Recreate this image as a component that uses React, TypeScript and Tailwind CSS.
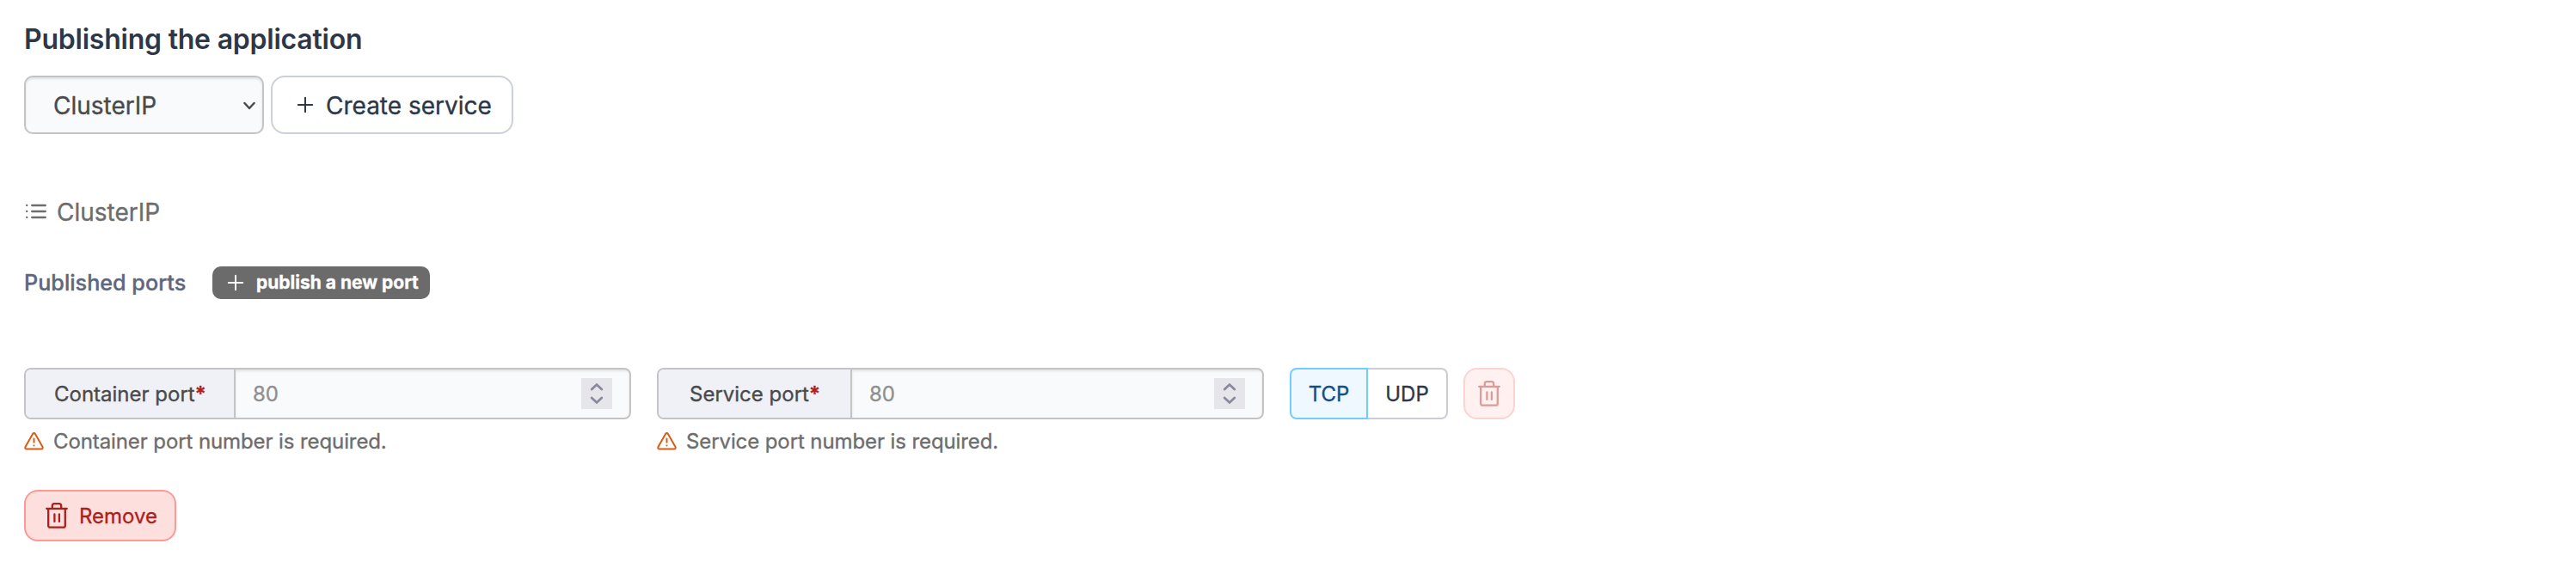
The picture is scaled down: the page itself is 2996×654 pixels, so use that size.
import React from "react";

function Plus({ className }: { className: string }) {
  return (
    <svg className={className} viewBox="0 0 20 20" fill="none" stroke="currentColor" strokeWidth={2} strokeLinecap="round">
      <path d="M10 1.800v16.400M1.800 10h16.400" />
    </svg>
  );
}

function Trash({ className }: { className: string }) {
  return (
    <svg className={className} viewBox="0 0 26 30" fill="none" stroke="currentColor" strokeWidth={2.3} strokeLinecap="round" strokeLinejoin="round">
      <path d="M1.2 6.800h23.600M3.200 6.800v19.900a2 2 0 0 0 2 2h15.600a2 2 0 0 0 2-2V6.800M7.800 6.800V3.700a2.500 2.500 0 0 1 2.500-2.500h5.400a2.500 2.500 0 0 1 2.500 2.500v3.100M10.400 13.300v8.600M15.900 13.300v8.600" />
    </svg>
  );
}

function Warning() {
  return (
    <svg className="h-[21px] w-[23px] shrink-0 text-[#d95b14]" viewBox="0 0 23 21" fill="none" stroke="currentColor" strokeWidth={2} strokeLinecap="round" strokeLinejoin="round">
      <path d="M10.1 1.9 1.500 17.100A1.600 1.600 0 0 0 2.900 19.500h17.200a1.600 1.600 0 0 0 1.400-2.400L12.900 1.900a1.600 1.600 0 0 0-2.800 0zM11.500 7.400v4.400M11.500 15.400v.1" />
    </svg>
  );
}

function PortField({ label, addonClass }: { label: string; addonClass: string }) {
  return (
    <div className="w-[706px]">
      <div className="flex h-[60px] overflow-hidden rounded-[8px] border-2 border-[#c4c4c4] bg-[#f9fafc] text-[24px]">
        <div className={addonClass}>
          {label}
          <span className="font-semibold text-[#b01e1a]">*</span>
        </div>
        <div className="flex flex-1 items-center justify-between pr-5 pl-5 text-[#8f8f8f] shadow-[inset_0_2px_3px_rgba(0,0,0,0.1)]">
          <span className="pt-px">80</span>
          <span className="flex h-9 w-9 items-center justify-center bg-[#e6e5ea] text-[#8a889b]">
            <svg className="h-[26px] w-4" viewBox="0 0 16 26" fill="none" stroke="currentColor" strokeWidth={2.8} strokeLinecap="round">
              <path d="M2.200 8 8 2.600 13.800 8M2.200 18 8 23.400 13.800 18" />
            </svg>
          </span>
        </div>
      </div>
      <div className="mt-[9px] flex h-8 items-center gap-[11px] text-[24px] tracking-[-0.1px] text-[#6d6d6d]">
        <Warning />
        <span className="pt-px">{label} number is required.</span>
      </div>
    </div>
  );
}

export default function App() {
  return (
    <div className="h-[654px] w-full bg-white pt-6 pl-7 font-['Inter',sans-serif] text-[#2d3748] [-webkit-text-stroke:0.35px]">
      <h1 className="h-10 pt-[2px] text-[32px] leading-10 font-semibold tracking-[-0.23px] [-webkit-text-stroke:0px]">Publishing the application</h1>
      <div className="mt-6 flex h-[68px] gap-2 text-[28px]">
        <div className="flex w-[279px] items-center justify-between rounded-[10px] border-2 border-[#c4c4c4] bg-[#f9fafc] pr-[8px] pl-8 text-[#4a4a4a] shadow-[inset_0_2px_3px_rgba(0,0,0,0.1)]">
          <span className="pt-px">ClusterIP</span>
          <svg className="mt-px h-[10px] w-[14px]" viewBox="0 0 14 10" fill="none" stroke="currentColor" strokeWidth={2.5} strokeLinecap="round" strokeLinejoin="round">
            <path d="m1.500 2 5.500 6 5.500-6" />
          </svg>
        </div>
        <button className="flex w-[282px] items-center rounded-[16px] border-2 border-[#cbd0dc] pl-7">
          <Plus className="h-5 w-5" />
          <span className="ml-[14px] pt-px">Create service</span>
        </button>
      </div>
      <div className="mt-[72px] flex h-9 items-center text-[28px] text-[#6d6d6d]">
        <svg className="h-5 w-[26px]" viewBox="0 0 26 20" fill="none" stroke="currentColor" strokeWidth={2.3} strokeLinecap="round">
          <path d="M9.200 3h15.600M9.200 10h15.600M9.200 17h15.600M3.200 3h.1M3.200 10h.1M3.200 17h.1" />
        </svg>
        <span className="ml-3 pt-[2px]">ClusterIP</span>
      </div>
      <div className="mt-[46px] flex h-[38px] items-center">
        <span className="w-[189px] pt-[2px] text-[25.200px] font-medium whitespace-nowrap text-[#5d6780]">Published ports</span>
        <button className="ml-[30px] flex h-[38px] w-[253px] items-center rounded-[10px] bg-[#6b6b6b] pl-[17px] text-[21px] font-bold whitespace-nowrap text-white">
          <Plus className="h-5 w-5" />
          <span className="ml-[14px]">publish a new port</span>
        </button>
      </div>
      <div className="mt-20 flex items-start">
        <PortField label="Container port" addonClass="flex w-[244px] shrink-0 items-center border-r-2 border-[#c4c4c4] bg-[#f0f1f6] pl-[33px] pt-px text-[#4a4a4a]" />
        <div className="w-[30px]" />
        <PortField label="Service port" addonClass="flex w-[225px] shrink-0 items-center border-r-2 border-[#c4c4c4] bg-[#f0f1f6] pl-9 pt-px text-[#4a4a4a]" />
        <div className="ml-[30px] flex h-[60px] text-[24px]">
          <button className="flex w-[91px] items-center justify-center rounded-l-[8px] border-2 border-[#72cdf8] bg-[#eff7ff] pt-px text-[#134f80]">TCP</button>
          <button className="flex w-[93px] items-center justify-center rounded-r-[8px] border-2 border-l-0 border-[#cacdd6] pt-px">UDP</button>
        </div>
        <button className="ml-[18px] flex h-[60px] w-[60px] items-center justify-center rounded-[16px] border-2 border-[#fdd3d1] bg-[#fef1f0] text-[#db9b99]">
          <Trash className="h-[30px] w-[26px]" />
        </button>
      </div>
      <button className="mt-[41px] flex h-[60px] w-[177px] items-center rounded-[16px] border-2 border-[#fb9a95] bg-[#fde0de] pl-[23px] text-[24px] text-[#ac1f1b]">
        <Trash className="h-[30px] w-[26px]" />
        <span className="ml-[13px] pt-px">Remove</span>
      </button>
    </div>
  );
}
